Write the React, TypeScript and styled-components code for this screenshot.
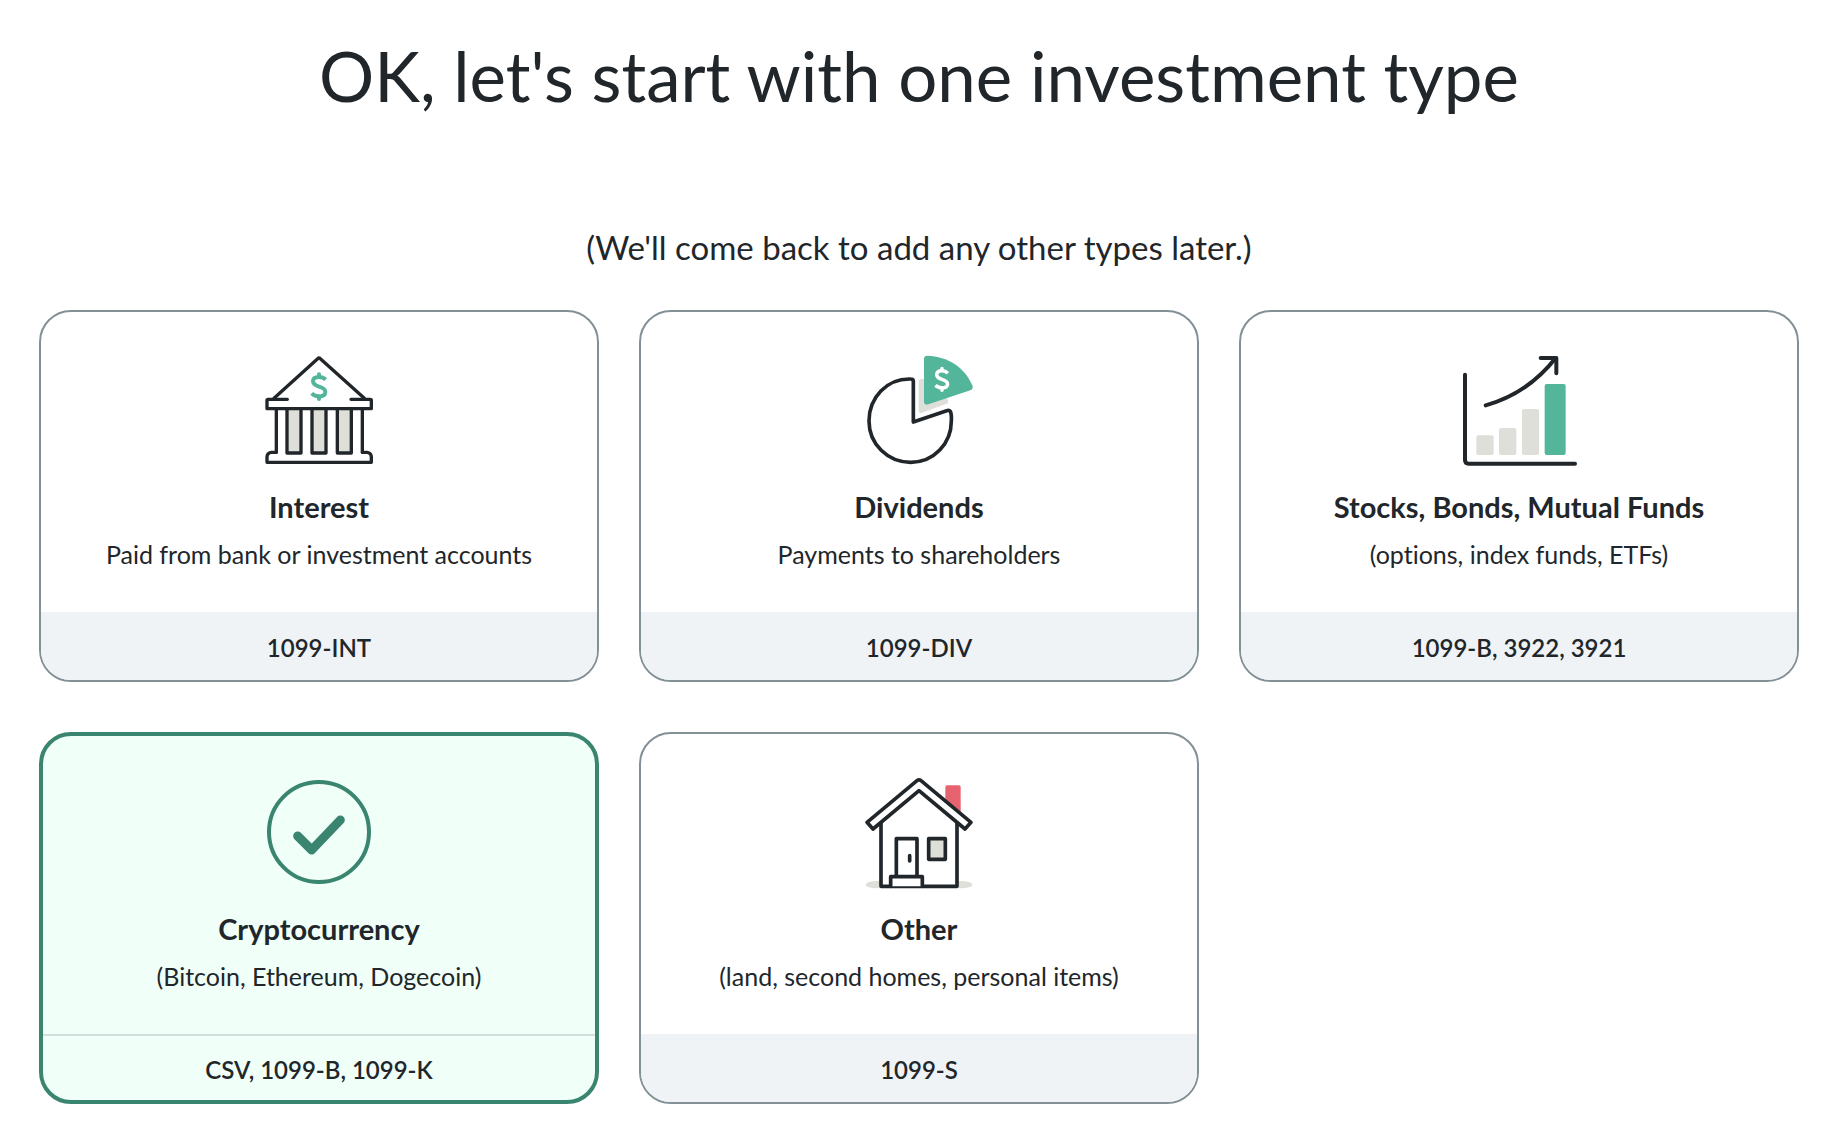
import React, { useState } from "react";
import styled, { createGlobalStyle } from "styled-components";

const ink = "#21262a";
const green = "#53b59a";
const darkGreen = "#398570";
const stone = "#dedfd9";

const GlobalStyle = createGlobalStyle`
  *, *::before, *::after { box-sizing: border-box; }
  body {
    margin: 0;
    background: #ffffff;
    color: ${ink};
    font-family: Lato, "Open Sans", sans-serif;
  }
`;

const Page = styled.main`
  padding: 34px 43px 36px 39px;
`;

const Heading = styled.h1`
  margin: 0 0 109px;
  font-size: 69px;
  line-height: 84px;
  font-weight: 400;
  text-align: center;
`;

const Lead = styled.p`
  margin: 0 0 43px;
  font-size: 33px;
  line-height: 40px;
  text-align: center;
`;

const CardGrid = styled.div`
  display: grid;
  grid-template-columns: repeat(3, minmax(0, 1fr));
  gap: 50px 40px;
`;

const Card = styled.button<{ $selected: boolean }>`
  --edge: ${(p) => (p.$selected ? "4px" : "2px")};
  display: flex;
  flex-direction: column;
  align-items: stretch;
  padding: 0;
  overflow: hidden;
  border: var(--edge) solid ${(p) => (p.$selected ? darkGreen : "#839197")};
  border-radius: 32px;
  background: ${(p) => (p.$selected ? "#f0fff8" : "#ffffff")};
  color: inherit;
  font: inherit;
  text-align: center;
  cursor: pointer;
`;

const CardBody = styled.span`
  display: flex;
  flex: 1;
  flex-direction: column;
  align-items: center;
  padding: calc(40px - var(--edge)) 24px 42px;
`;

const Icon = styled.svg`
  width: 120px;
  height: 120px;
`;

const CardTitle = styled.span`
  margin-top: 21px;
  font-size: 29px;
  line-height: 32px;
  font-weight: 700;
`;

const CardText = styled.span`
  margin-top: 15px;
  font-size: 25px;
  line-height: 32px;
  font-variant-ligatures: none;
`;

const CardForms = styled.span<{ $selected: boolean }>`
  padding: 18px 24px calc(18px - var(--edge));
  border-top: 2px solid ${(p) => (p.$selected ? "#d2dedd" : "#eff3f6")};
  background: ${(p) => (p.$selected ? "transparent" : "#eff3f6")};
  font-size: 24px;
  line-height: 32px;
  font-weight: 600;
`;

const Dollar = ({ x, y, scale, color }: { x: number; y: number; scale: number; color: string }) => (
  <g
    transform={`translate(${x} ${y}) scale(${scale})`}
    fill="none"
    stroke={color}
    strokeWidth="12"
    strokeLinecap="butt"
  >
    <path d="M20 -21C14 -27 6 -29 0 -29C-11 -29 -18 -25 -18 -16C-18 -8 -12 -4 0 0C13 4 19 8 19 16C19 25 11 29 0 29C-8 29 -16 26 -22 20" />
    <path strokeLinecap="round" d="M0 -37V-31M0 31V37" />
  </g>
);

const BankIcon = () => (
  <Icon viewBox="27 30 360 360" aria-hidden="true">
    <g fill={stone}>
      <path d="M110 205h43v134h-43zM187 205h41v134h-41zM263 205h41v134h-41z" />
    </g>
    <g fill="none" stroke={ink} strokeWidth="10" strokeLinecap="round" strokeLinejoin="round">
      <path d="M72 175L203 56Q207 52 211 56L343 175" />
      <path d="M112 178H54Q51 178 51 181V206H364V181Q364 178 361 178H303" />
      <path d="M79 206V337M337 206V337" />
      <path d="M111 206V339H153V206M186 206V339H228V206M262 206V339H304V206" />
      <path d="M79 337H64Q51 339 51 351V367H364V351Q364 339 351 337H337" />
    </g>
    <Dollar x={207} y={140} scale={1} color={green} />
  </Icon>
);

const PieIcon = () => (
  <Icon viewBox="27 30 360 360" aria-hidden="true">
    <path d="M206 125Q206 117 214 117H250L294 180V190L214 219Q206 221 206 213Z" fill={stone} />
    <path
      d="M190 246V124Q190 117 182 117C110 115 57 173 57 243C57 312 113 367 182 367C252 367 304 310 304 243Q305 222 301 214Q298 210 290 212Z"
      fill="none"
      stroke={ink}
      strokeWidth="11"
      strokeLinejoin="round"
    />
    <path d="M222 56Q222 47 232 47C293 49 344 82 367 136Q371 147 361 151L235 193Q222 197 222 184Z" fill={green} />
    <Dollar x={276} y={118} scale={0.88} color="#ffffff" />
  </Icon>
);

const ChartIcon = () => (
  <Icon viewBox="27 30 360 360" aria-hidden="true">
    <g fill={stone}>
      <rect x="79" y="286" width="52" height="59" rx="6" />
      <rect x="147" y="264" width="52" height="81" rx="6" />
      <rect x="216" y="207" width="51" height="138" rx="6" />
    </g>
    <rect x="284" y="132" width="63" height="213" rx="6" fill={green} />
    <g fill="none" stroke={ink} strokeWidth="12" strokeLinecap="round" strokeLinejoin="round">
      <path d="M45 104V360Q45 371 56 371H375" />
      <path d="M107 196Q233 161 317 54" />
      <path d="M272 54H319V100" />
    </g>
  </Icon>
);

const CheckIcon = () => (
  <Icon viewBox="27 36 360 360" aria-hidden="true">
    <g fill="none" stroke={darkGreen} strokeLinecap="round" strokeLinejoin="round">
      <circle cx="207" cy="216" r="150" strokeWidth="12" />
      <path d="M143 228L185 270L271 180" strokeWidth="27" />
    </g>
  </Icon>
);

const HouseIcon = () => (
  <Icon viewBox="27 36 360 360" aria-hidden="true">
    <ellipse cx="82" cy="374" rx="35" ry="11" fill={stone} />
    <ellipse cx="332" cy="374" rx="35" ry="11" fill={stone} />
    <path d="M286 81Q286 76 291 76H327Q332 76 332 81V156L286 118Z" fill="#e7636f" />
    <g fill="#ffffff" stroke={ink} strokeWidth="11" strokeLinecap="round" strokeLinejoin="round">
      <path d="M93 180V379H321V180L207 88Z" />
      <path d="M51 187L201 62Q207 57 213 62L363 187L345 207L207 92L69 207Z" />
      <path d="M139 350V236H201V350" />
      <rect x="236" y="236" width="50" height="62" fill={stone} />
      <path d="M122 379V350H217V379" />
      <path d="M179 287V303" />
    </g>
  </Icon>
);

const investmentTypes = [
  { id: "interest", title: "Interest", text: "Paid from bank or investment accounts", forms: "1099-INT", Picture: BankIcon },
  { id: "dividends", title: "Dividends", text: "Payments to shareholders", forms: "1099-DIV", Picture: PieIcon },
  { id: "stocks", title: "Stocks, Bonds, Mutual Funds", text: "(options, index funds, ETFs)", forms: "1099-B, 3922, 3921", Picture: ChartIcon },
  { id: "crypto", title: "Cryptocurrency", text: "(Bitcoin, Ethereum, Dogecoin)", forms: "CSV, 1099-B, 1099-K", Picture: CheckIcon },
  { id: "other", title: "Other", text: "(land, second homes, personal items)", forms: "1099-S", Picture: HouseIcon },
];

export default function App() {
  const [selectedId, setSelectedId] = useState("crypto");

  return (
    <>
      <GlobalStyle />
      <Page>
        <Heading>OK, let's start with one investment type</Heading>
        <Lead>(We'll come back to add any other types later.)</Lead>
        <CardGrid>
          {investmentTypes.map(({ id, title, text, forms, Picture }) => {
            const selected = id === selectedId;
            return (
              <Card key={id} type="button" aria-pressed={selected} $selected={selected} onClick={() => setSelectedId(id)}>
                <CardBody>
                  <Picture />
                  <CardTitle>{title}</CardTitle>
                  <CardText>{text}</CardText>
                </CardBody>
                <CardForms $selected={selected}>{forms}</CardForms>
              </Card>
            );
          })}
        </CardGrid>
      </Page>
    </>
  );
}
